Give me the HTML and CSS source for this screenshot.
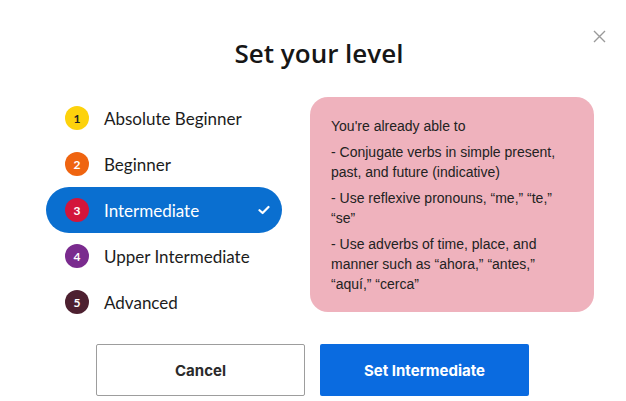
FILE: index.html
```html
<!DOCTYPE html>
<html lang="en">
<head>
  <meta charset="UTF-8" />
  <meta name="viewport" content="width=device-width, initial-scale=1.0"/>
  <title>Set your level</title>
  <link rel="stylesheet" href="styles.css">
</head>
<body>

  <div class="modal">
    <button class="close-btn" aria-label="Close">
      <svg width="13" height="13" viewBox="0 0 13 13">
        <path d="M1 1 L12 12 M12 1 L1 12" stroke="#9a9a9a" stroke-width="1.4" fill="none"/>
      </svg>
    </button>

    <h1>Set your level</h1>

    <div class="level-body">
      <ul class="level-list">
        <li class="level-item"><span class="num n1">1</span>Absolute Beginner</li>
        <li class="level-item"><span class="num n2">2</span>Beginner</li>
        <li class="level-item selected"><span class="num n3">3</span>Intermediate
          <svg class="check" width="12" height="10" viewBox="0 0 12 10">
            <path d="M1.5 5.2 L4.6 8 L10.5 2" stroke="#fff" stroke-width="2.2" fill="none" stroke-linecap="round" stroke-linejoin="round"/>
          </svg>
        </li>
        <li class="level-item"><span class="num n4">4</span>Upper Intermediate</li>
        <li class="level-item"><span class="num n5">5</span>Advanced</li>
      </ul>

      <div class="level-info">
        <p>You're already able to</p>
        <p>- Conjugate verbs in simple present, past, and future (indicative)</p>
        <p>- Use reflexive pronouns, “me,” “te,” “se”</p>
        <p>- Use adverbs of time, place, and manner such as “ahora,” “antes,” “aquí,” “cerca”</p>
      </div>
    </div>

    <div class="actions">
      <button class="btn btn-cancel">Cancel</button>
      <button class="btn btn-primary">Set Intermediate</button>
    </div>
  </div>

</body>
</html>
```

FILE: styles.css
```css
body {
  margin: 0;
  background-color: #fff;
  font-family: Lato, 'Noto Sans', sans-serif;
  color: #1c1c1c;
}

.modal {
  position: relative;
  width: 626px;
  height: 401px;
  overflow: hidden;
}

.close-btn {
  position: absolute;
  top: 30px;
  right: 20px;
  background: none;
  border: none;
  padding: 0;
  cursor: pointer;
}

h1 {
  margin: 0;
  padding: 36px 0 0 12px;
  height: 61px;
  box-sizing: border-box;
  text-align: center;
  font-family: 'Open Sans', sans-serif;
  font-size: 26px;
  font-weight: 600;
  line-height: 34px;
  color: #161616;
}

.level-body {
  display: flex;
  gap: 28px;
  padding-left: 46px;
  margin-top: 34px;
}

.level-list {
  list-style: none;
  margin: 0;
  padding: 0;
  width: 236px;
}

.level-item {
  display: flex;
  align-items: center;
  height: 46px;
  padding-left: 19px;
  font-size: 17px;
  color: #1c1c1c;
  border-radius: 23px;
}

.level-item.selected {
  background-color: #0a6fd0;
  color: #fff;
}

.check {
  margin-left: auto;
  margin-right: 12px;
}

.num {
  width: 24px;
  height: 24px;
  border-radius: 50%;
  display: flex;
  align-items: center;
  justify-content: center;
  margin-right: 15px;
  font-size: 12px;
  font-weight: bold;
  color: #fff;
}

.n1 { background-color: #fdd20c; color: #222; }
.n2 { background-color: #ef6410; }
.n3 { background-color: #d3153b; }
.n4 { background-color: #7a2b8e; }
.n5 { background-color: #4d2030; }

.level-info {
  width: 284px;
  height: 215px;
  box-sizing: border-box;
  margin-top: 2px;
  padding: 19px 30px 0 21px;
  background-color: #efb2bd;
  border-radius: 18px;
  font-family: 'Liberation Sans', Arial, sans-serif;
  font-size: 14px;
  line-height: 20px;
  color: #222;
}

.level-info p {
  margin: 0 0 6px;
}

.actions {
  display: flex;
  justify-content: center;
  gap: 15px;
  margin-top: 19px;
  padding-right: 1px;
}

.btn {
  width: 209px;
  height: 52px;
  font-family: Inter, Roboto, sans-serif;
  font-size: 15px;
  font-weight: bold;
  cursor: pointer;
  border-radius: 2px;
}

.btn-cancel {
  background-color: #fff;
  border: 1px solid #9d9d9d;
  color: #2b2b2b;
}

.btn-primary {
  background-color: #0a6be0;
  border: none;
  color: #fff;
}
```
